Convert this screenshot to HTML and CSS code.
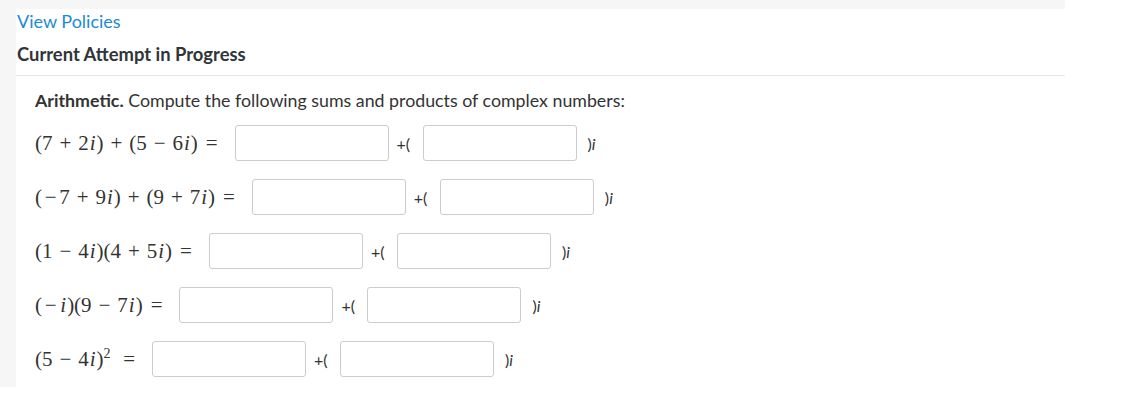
FILE: index.html
```html
<!DOCTYPE html>
<html lang="en">
<head>
    <meta charset="UTF-8">
    <meta name="viewport" content="width=device-width, initial-scale=1.0">
    <title>Current Attempt in Progress</title>
    <link rel="stylesheet" href="styles.css">
</head>
<body>
    <div class="pagina">
        <div class="panel">
            <a class="politicas" href="#">View Policies</a>
            <h2 class="intento">Current Attempt in Progress</h2>

            <div class="pregunta">
                <p class="enunciado"><strong>Arithmetic.</strong> Compute the following sums and products of complex numbers:</p>

                <!-- cada fila: expresion = [real] +( [imaginaria] )i -->
                <div class="fila">
                    <span class="mat">(7<span class="op">+</span>2<i>i</i>)<span class="op">+</span>(5<span class="op">&minus;</span>6<i>i</i>)<span class="rel">=</span></span>
                    <input type="text" class="caja">
                    <span class="mas">+(</span>
                    <input type="text" class="caja">
                    <span class="cierre">)<i>i</i></span>
                </div>

                <div class="fila">
                    <span class="mat">(<span class="neg">&minus;</span>7<span class="op">+</span>9<i>i</i>)<span class="op">+</span>(9<span class="op">+</span>7<i>i</i>)<span class="rel">=</span></span>
                    <input type="text" class="caja">
                    <span class="mas">+(</span>
                    <input type="text" class="caja">
                    <span class="cierre">)<i>i</i></span>
                </div>

                <div class="fila">
                    <span class="mat">(1<span class="op">&minus;</span>4<i>i</i>)(4<span class="op">+</span>5<i>i</i>)<span class="rel">=</span></span>
                    <input type="text" class="caja">
                    <span class="mas">+(</span>
                    <input type="text" class="caja">
                    <span class="cierre">)<i>i</i></span>
                </div>

                <div class="fila">
                    <span class="mat">(<span class="neg">&minus;</span><i>i</i>)(9<span class="op">&minus;</span>7<i>i</i>)<span class="rel">=</span></span>
                    <input type="text" class="caja">
                    <span class="mas">+(</span>
                    <input type="text" class="caja">
                    <span class="cierre">)<i>i</i></span>
                </div>

                <div class="fila">
                    <span class="mat">(5<span class="op">&minus;</span>4<i>i</i>)<sup>2</sup><span class="rel rel-ancho">=</span></span>
                    <input type="text" class="caja">
                    <span class="mas">+(</span>
                    <input type="text" class="caja">
                    <span class="cierre">)<i>i</i></span>
                </div>
            </div>
        </div>
    </div>
</body>
</html>
```

FILE: styles.css
```css
body {
    margin: 0;
    background-color: #fff;
    font-family: Lato, "Liberation Sans", sans-serif;
    color: #333;
}
.pagina {
    width: 1065px;
    height: 387px;
    box-sizing: border-box;
    background-color: #f6f6f6; /* fondo gris claro */
    padding: 9px 0 0 16px;
}
.panel {
    background-color: #fff;
    height: 100%;
    padding-left: 1px;
}
.politicas {
    display: block;
    color: #1b8bd4;
    text-decoration: none;
    font-size: 18px;
    line-height: 24px;
}
.intento {
    margin: 9px 0 0 -1px;
    padding: 0 0 9px 1px;
    font-size: 18.4px;
    font-weight: bold;
    line-height: 24px;
    color: #2f3539;
    border-bottom: 1px solid #e6e6e6;
}
.pregunta {
    padding: 12px 0 0 18px;
}
.enunciado {
    margin: 0 0 13px 0;
    font-size: 17.8px;
    line-height: 24px;
}
.enunciado strong {
    font-weight: bold;
}
.fila {
    display: flex;
    align-items: center;
    height: 36px;
    margin-bottom: 18px;
}
.mat {
    font-family: "Liberation Serif", serif;
    font-size: 21px;
    color: #333;
    white-space: nowrap;
}
.mat i {
    padding: 0 1px;
}
.op {
    margin: 0 0.33em;
}
.neg {
    margin: 0 0.13em;
}
.rel {
    margin-left: 0.38em;
}
.rel-ancho {
    margin-left: 0.6em;
}
.mat sup {
    font-size: 14px;
}
.caja {
    width: 154px;
    height: 36px;
    box-sizing: border-box;
    border: 1px solid #ccc;
    border-radius: 3px;
    margin-left: 17px;
    padding: 4px 8px;
    font-size: 14px;
}
.mas {
    font-size: 16px;
    margin: 0 -10px 0 8px;
    width: 19px;
}
.cierre {
    font-size: 16px;
    margin-left: 11px;
}
```
